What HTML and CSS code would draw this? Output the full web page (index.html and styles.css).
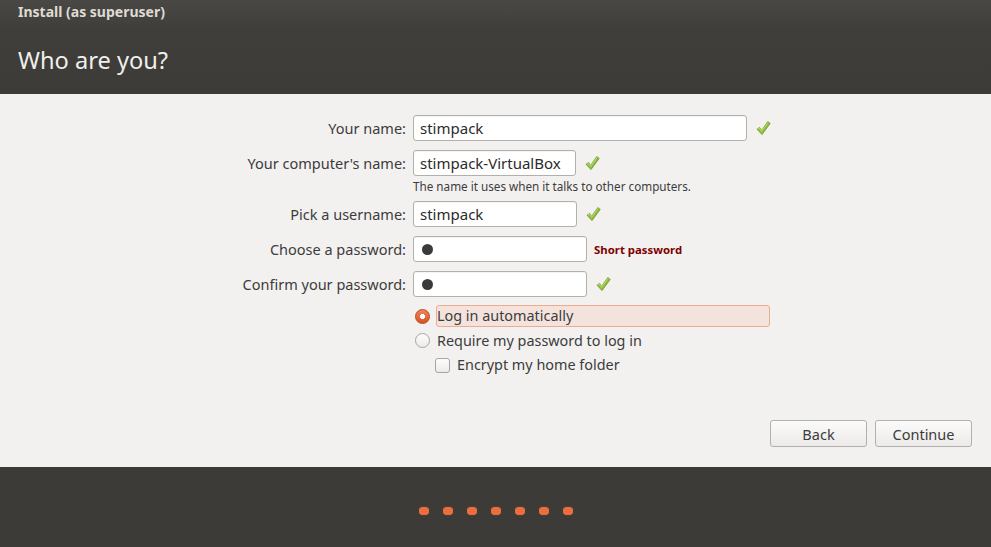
FILE: index.html
```html
<!DOCTYPE html>
<html>
<head>
<meta charset="utf-8">
<link rel="stylesheet" href="styles.css">
</head>
<body>
<div class="window">
  <header class="header">
    <div class="wm-title">Install (as superuser)</div>
    <h1 class="page-title">Who are you?</h1>
  </header>
  <main class="content">
    <div class="form">
      <label class="lbl">Your name:</label>
      <div class="field"><div class="input w1">stimpack</div><svg class="check" viewBox="0 0 16 16"><path d="M2 9.2 L4.6 7.4 L6.6 10.4 L12.8 1.6 L15.2 3.4 L7 14.6 Z" fill="#8bbd3a" stroke="#6e9a26" stroke-width="0.8" stroke-linejoin="round"/><path d="M3 9.1 L4.4 8.2 L6.6 11.4 L13 2.6" fill="none" stroke="#c3e07c" stroke-width="0.9"/></svg></div>

      <label class="lbl">Your computer's name:</label>
      <div class="field"><div class="input w2">stimpack-VirtualBox</div><svg class="check" viewBox="0 0 16 16"><path d="M2 9.2 L4.6 7.4 L6.6 10.4 L12.8 1.6 L15.2 3.4 L7 14.6 Z" fill="#8bbd3a" stroke="#6e9a26" stroke-width="0.8" stroke-linejoin="round"/><path d="M3 9.1 L4.4 8.2 L6.6 11.4 L13 2.6" fill="none" stroke="#c3e07c" stroke-width="0.9"/></svg></div>
      <div></div>
      <div class="hint">The name it uses when it talks to other computers.</div>

      <label class="lbl">Pick a username:</label>
      <div class="field"><div class="input w3">stimpack</div><svg class="check" viewBox="0 0 16 16"><path d="M2 9.2 L4.6 7.4 L6.6 10.4 L12.8 1.6 L15.2 3.4 L7 14.6 Z" fill="#8bbd3a" stroke="#6e9a26" stroke-width="0.8" stroke-linejoin="round"/><path d="M3 9.1 L4.4 8.2 L6.6 11.4 L13 2.6" fill="none" stroke="#c3e07c" stroke-width="0.9"/></svg></div>

      <label class="lbl">Choose a password:</label>
      <div class="field"><div class="input w4"><span class="dot"></span></div><span class="warn">Short password</span></div>

      <label class="lbl">Confirm your password:</label>
      <div class="field"><div class="input w4"><span class="dot"></span></div><svg class="check" viewBox="0 0 16 16"><path d="M2 9.2 L4.6 7.4 L6.6 10.4 L12.8 1.6 L15.2 3.4 L7 14.6 Z" fill="#8bbd3a" stroke="#6e9a26" stroke-width="0.8" stroke-linejoin="round"/><path d="M3 9.1 L4.4 8.2 L6.6 11.4 L13 2.6" fill="none" stroke="#c3e07c" stroke-width="0.9"/></svg></div>

      <div></div>
      <div class="options">
        <div class="opt"><span class="radio on"></span><span class="opt-text focus">Log in automatically</span></div>
        <div class="opt"><span class="radio"></span><span class="opt-text">Require my password to log in</span></div>
        <div class="opt sub"><span class="box"></span><span class="opt-text">Encrypt my home folder</span></div>
      </div>
    </div>
    <div class="actions">
      <button class="btn back">Back</button>
      <button class="btn cont">Continue</button>
    </div>
  </main>
  <footer class="footer">
    <div class="dots"><span></span><span></span><span></span><span></span><span></span><span></span><span></span></div>
  </footer>
</div>
</body>
</html>
```
FILE: styles.css
```css
* { box-sizing: border-box; }
html, body { margin: 0; padding: 0; }
body {
  width: 991px;
  height: 547px;
  overflow: hidden;
  font-family: "Noto Sans", "DejaVu Sans", sans-serif;
  color: #3c3c3c;
  background: #f2f1f0;
}
.window { display: flex; flex-direction: column; height: 547px; }
.header {
  height: 94px;
  background: linear-gradient(#4a4844 0px, #3f3e3a 30px, #3c3b37 94px);
  padding: 2px 0 0 18px;
}
.wm-title {
  font-size: 14px;
  font-weight: bold;
  color: #dfdbd2;
  line-height: 19px;
}
.page-title {
  margin: 24px 0 0 0;
  font-weight: normal;
  font-size: 23.6px;
  line-height: 30px;
  color: #f0efec;
}
.content {
  flex: 1;
  background: #f2f1f0;
  padding-top: 21px;
  display: flex;
  flex-direction: column;
}
.form {
  display: grid;
  grid-template-columns: 406px auto;
  column-gap: 7px;
  row-gap: 9px;
  align-items: center;
  justify-content: start;
}
.lbl {
  text-align: right;
  font-size: 14.5px;
  color: #3c3c3c;
}
.field { display: flex; align-items: center; height: 26px; }
.input {
  height: 26px;
  border: 1px solid #b3b0ab;
  border-radius: 3px;
  background: #fff;
  box-shadow: inset 0 1px 1px rgba(0,0,0,0.05);
  font-size: 15px;
  line-height: 24px;
  padding-left: 6px;
  color: #2b2b2b;
  display: flex;
  align-items: center;
}
.w1 { width: 334px; }
.w2 { width: 163px; }
.w3 { width: 164px; }
.w4 { width: 174px; }
.check { width: 16px; height: 16px; margin-left: 8px; }
.dot {
  width: 11px; height: 11px; border-radius: 50%;
  background: #3a3a3a; margin-left: 2px;
}
.warn {
  margin-left: 7px;
  font-size: 11.4px;
  font-weight: bold;
  color: #7f0000;
}
.hint {
  font-size: 11.7px;
  color: #3c3c3c;
  margin-top: -6px;
  margin-bottom: -1px;
  line-height: 14px;
}
.options { display: flex; flex-direction: column; margin-top: -2px; }
.opt { display: flex; align-items: center; height: 24.5px; }
.radio {
  width: 15px; height: 15px; border-radius: 50%;
  border: 1px solid #a8a5a0;
  background: linear-gradient(#fdfdfd, #ecebea);
  margin-left: 2px;
  flex: none;
}
.radio.on {
  border-color: #b44a22;
  background: radial-gradient(circle, #fff 0 2.3px, transparent 2.8px), linear-gradient(#f0855a, #d9531f);
}
.opt-text { font-size: 14.4px; margin-left: 6px; line-height: 20px; padding: 0 1px; }
.opt-text.focus {
  width: 334px;
  height: 22px;
  background: #f4e3dc;
  border: 1px solid #eeab8e;
  border-radius: 3px;
  margin-left: 6px;
  padding-left: 0;
}
.sub { padding-left: 22px; }
.box {
  width: 15px; height: 15px; border-radius: 3px;
  border: 1px solid #a8a5a0;
  background: linear-gradient(#fdfdfd, #ecebea);
  flex: none;
}
.actions {
  margin-top: auto;
  margin-bottom: 20px;
  display: flex;
  justify-content: flex-end;
  gap: 8px;
  padding-right: 19px;
}
.btn {
  width: 97px;
  height: 27px;
  border: 1px solid #b3b0ab;
  border-radius: 3px;
  background: linear-gradient(#fbfbfb, #eceae8);
  font-family: "Noto Sans", "DejaVu Sans", sans-serif;
  font-size: 14.5px;
  color: #3c3c3c;
  padding: 0;
}
.footer {
  height: 80px;
  background: #3c3b37;
  display: flex;
  justify-content: center;
  padding-top: 40px;
}
.dots { display: flex; gap: 14px; margin-left: 0; }
.dots span {
  width: 10px; height: 8px; border-radius: 4px;
  background: #ed6b3c;
  box-shadow: 0 0 1px #9a7a6a;
}
```
